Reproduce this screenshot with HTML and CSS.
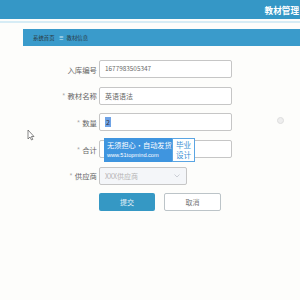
FILE: index.html
```html
<!DOCTYPE html>
<html>
	<head>
		<meta charset="UTF-8">
		<title>教材管理</title>
		<link rel="stylesheet" href="styles.css">
	</head>
	<body>
		<div class="top">
			<span class="top-title">教材管理</span>
		</div>
		<div class="top-line"></div>
		<div class="crumb">
			<span>系统首页</span>
			<span class="crumb-sep">☰</span>
			<span>教材信息</span>
		</div>
		<div class="main">
			<div class="row">
				<span class="label">入库编号</span>
				<div class="box num">1677983505347</div>
			</div>
			<div class="row">
				<span class="label"><i>*</i>教材名称</span>
				<div class="box">英语语法</div>
			</div>
			<div class="row">
				<span class="label"><i>*</i>数量</span>
				<div class="box"><span class="sel">2</span></div>
				<span class="dot"></span>
			</div>
			<div class="row">
				<span class="label"><i>*</i>合计</span>
				<div class="box"></div>
				<!-- 水印 -->
				<div class="mark">
					<div class="mark-blue">
						<span class="mark-a">无须担心·自动发货</span>
						<span class="mark-b">www.51topmind.com</span>
					</div>
					<div class="mark-white">毕业<br>设计</div>
				</div>
			</div>
			<div class="row">
				<span class="label"><i>*</i>供应商</span>
				<div class="box select">
					<span class="ph">XXX供应商</span>
					<svg width="6" height="4" viewBox="0 0 6 4"><path d="M0.5 0.5 L3 3 L5.5 0.5" fill="none" stroke="#c0c4cc" stroke-width="0.8"/></svg>
				</div>
			</div>
			<div class="row btns">
				<span class="btn btn-ok">提交</span>
				<span class="btn btn-cancel">取消</span>
			</div>
			<svg class="cursor" width="8" height="12" viewBox="0 0 8 12"><path d="M1 1 L1 10 L3 8 L4.5 11 L5.8 10.4 L4.4 7.5 L7 7.5 Z" fill="#fff" stroke="#555" stroke-width="0.7"/></svg>
		</div>
	</body>
</html>
```

FILE: styles.css
```css
*{
	margin: 0;
	padding: 0;
	box-sizing: border-box;
}

body{
	background: #fdfdfb;
	font-family: "Noto Sans CJK SC", "Liberation Sans", sans-serif;
	color: #666;
	width: 300px;
	height: 300px;
	overflow: hidden;
}

.top{
	height: 19px;
	background: #3597c6;
	display: flex;
	align-items: center;
	justify-content: flex-end;
	padding-right: 1px;
}

.top-title{
	color: #fff;
	font-size: 8.6px;
	font-weight: bold;
	line-height: 12px;
}

.top-line{
	height: 2px;
	margin-top: 2px;
	background: #d6ecf5;
}

.crumb{
	height: 17px;
	margin: 6px 0 0 23px;
	padding-left: 10px;
	background: #3a9bcb;
	display: flex;
	align-items: center;
	gap: 4px;
	font-size: 5.4px;
	color: #2a3a44;
}

.crumb-sep{
	color: #d0e8f3;
}

.main{
	position: relative;
	padding-top: 14px;
	display: flex;
	flex-direction: column;
	gap: 8.7px;
}

.row{
	position: relative;
	display: flex;
	align-items: center;
	height: 18px;
}

.label{
	width: 99px;
	padding-right: 2px;
	text-align: right;
	font-size: 7.4px;
	color: #666;
}

.label i{
	font-style: normal;
	color: #aaa;
	margin-right: 2px;
}

.box{
	width: 133px;
	height: 18px;
	border: 1px solid #c6c6c6;
	border-radius: 2px;
	background: #fff;
	padding-left: 5px;
	font-size: 7px;
	line-height: 16px;
	color: #666;
}

.num{
	font-size: 6.4px;
}

.sel{
	background: #6fa3e6;
	color: #334;
	padding: 0 1px;
}

.select{
	width: 88px;
	background: #f4f6f9;
	display: flex;
	align-items: center;
	justify-content: space-between;
	padding-right: 6px;
}

.ph{
	color: #b4b4b4;
}

.btns{
	padding-left: 99px;
	gap: 9px;
}

.btn{
	width: 56px;
	height: 18px;
	border-radius: 2px;
	font-size: 7px;
	text-align: center;
	line-height: 18px;
}

.btn-ok{
	background: #3598c4;
	color: #e8f4fa;
}

.btn-cancel{
	width: 57px;
	border: 1px solid #bcc4c8;
	background: #fff;
	color: #777;
	line-height: 16px;
}

.dot{
	position: absolute;
	left: 277px;
	top: 4px;
	width: 7px;
	height: 7px;
	border-radius: 50%;
	border: 1px solid #ddd;
	background: #eee;
}

.mark{
	position: absolute;
	left: 104px;
	top: -2px;
	display: flex;
	height: 24px;
}

.mark-blue{
	width: 68px;
	background: #3f95df;
	color: #fff;
	display: flex;
	flex-direction: column;
	justify-content: center;
	padding-left: 3px;
	line-height: 10px;
}

.mark-a{
	font-size: 7.2px;
}

.mark-b{
	font-size: 5.6px;
	font-family: "Liberation Sans", sans-serif;
}

.mark-white{
	width: 23px;
	border: 1px solid #5aa5e3;
	background: #fff;
	color: #3a8fd4;
	font-size: 7.6px;
	line-height: 10px;
	padding: 1px 0 0 3px;
}

.cursor{
	position: absolute;
	left: 27px;
	top: 83px;
}
```
